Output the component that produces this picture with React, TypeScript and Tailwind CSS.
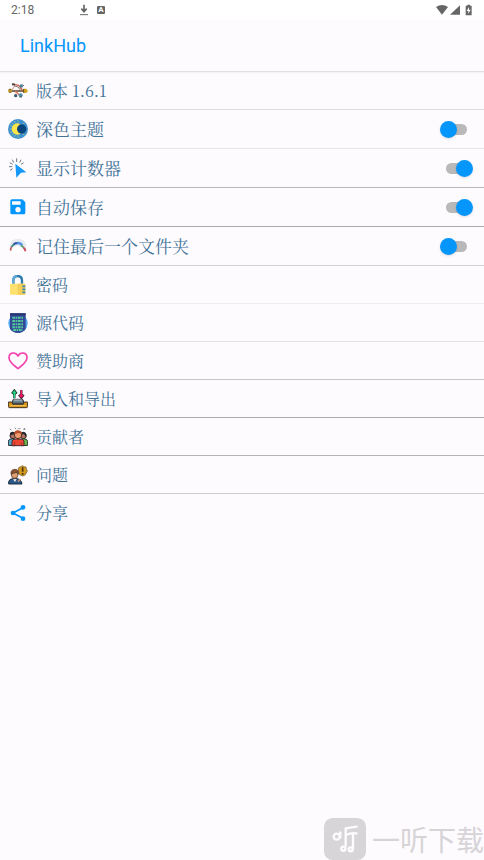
import {useState} from "react";
import type {ReactNode} from "react";

interface Setting {
    label: string;
    version?: string;
    icon: ReactNode;
    toggle?: boolean;
    border: string;
}

const VersionIcon = () => (
    <svg className="size-5 shrink-0" viewBox="0 0 60 60" fill="none">
        <path d="M5 30H52" stroke="#6b5335" strokeWidth="5" />
        <path d="M12 27L20 15" stroke="#e0b0a4" strokeWidth="4" />
        <path d="M17 10L32 13L43 27" stroke="#c9604c" strokeWidth="4" />
        <path d="M18 14L30 18L37 27" stroke="#4a3330" strokeWidth="2" />
        <path d="M22 31L32 40L40 42" stroke="#d9705c" strokeWidth="4" />
        <path d="M19 34L28 42" stroke="#e3b3a8" strokeWidth="2" />
        <rect x="12" y="7" width="8" height="6" fill="#4a4341" />
        <circle cx="40" cy="15" r="5" fill="#477d96" />
        <path d="M44 11L48 15" stroke="#333" strokeWidth="2" />
        <circle cx="23" cy="44" r="5" fill="#3f5f70" />
        <circle cx="38" cy="43" r="6" fill="#528ca2" />
        <path d="M34 48H42" stroke="#333" strokeWidth="2" />
        <circle cx="6" cy="29" r="6" fill="#c39a2a" />
        <path d="M3 25H10M3 34H10" stroke="#5a4420" strokeWidth="2" />
        <path d="M46 23H55L60 30L55 36H46Z" fill="#d5a321" />
        <path d="M47 24V35" stroke="#5a4420" strokeWidth="3" />
    </svg>
);

const ThemeIcon = () => (
    <svg className="size-5 shrink-0" viewBox="0 0 60 60">
        <circle cx="30" cy="30" r="30" fill="#3e91cf" />
        <path d="M30 4V11M30 49V56M4 30H11M11 11L17 17M11 49L17 43M49 11L43 17M49 49L43 43M19 6L22 12M19 54L22 48M6 19L12 22M6 41L12 38" stroke="#b9d283" strokeWidth="2" />
        <circle cx="28" cy="30" r="17" fill="#ffe44a" />
        <circle cx="41" cy="30" r="14" fill="#07457c" />
    </svg>
);

const CounterIcon = () => (
    <svg className="size-5 shrink-0" viewBox="0 0 60 60" fill="none">
        <path d="M26 1V12M13 5L17 14M39 5L35 14M5 14L14 19M47 14L39 19M3 26H13M6 37L14 32" stroke="#6d7984" strokeWidth="3" />
        <path d="M22 17L55 43L39 44L25 59Z" fill="#1497f6" />
    </svg>
);

const SaveIcon = () => (
    <svg className="size-5 shrink-0" viewBox="0 0 60 60">
        <path fillRule="evenodd" d="M12 7H43L52 16V47Q52 52 47 52H12Q7 52 7 47V12Q7 7 12 7ZM12 13V23H38V13ZM30 30A8 8 0 1 0 30 46A8 8 0 1 0 30 30Z" fill="#0596fc" />
    </svg>
);

const FolderMemoryIcon = () => (
    <svg className="size-5 shrink-0" viewBox="0 0 60 60" fill="none">
        <path d="M5 40V27Q8 8 30 8Q52 8 55 29V42H5Z" fill="#e9ecee" />
        <path d="M8 44Q7 37 11 33" stroke="#c75056" strokeWidth="5" />
        <path d="M11 33Q13 27 19 25" stroke="#3d8b82" strokeWidth="6" />
        <path d="M17 25Q24 20 30 22" stroke="#365ca9" strokeWidth="7" />
        <path d="M28 21Q38 20 42 28" stroke="#5a94ea" strokeWidth="8" />
        <path d="M40 28L47 35" stroke="#4ba165" strokeWidth="5" />
        <path d="M46 35Q52 38 52 46" stroke="#cf4f60" strokeWidth="6" />
        <path d="M12 46Q10 33 21 33Q27 27 34 32Q47 34 47 46Q36 56 20 50Z" fill="#fff" />
    </svg>
);

const PasswordIcon = () => (
    <svg className="size-5 shrink-0" viewBox="0 0 60 60" fill="none">
        <path d="M16 29V17Q16 3 29 3Q42 3 42 17V29" stroke="#2b79ad" strokeWidth="7" />
        <path d="M16 29V17Q16 4 27 3" stroke="#5daad9" strokeWidth="7" />
        <rect x="6" y="26" width="46" height="33" rx="3" fill="#ffe16f" />
        <path d="M29 26H49Q52 26 52 29V56Q52 59 49 59H29Z" fill="#f4ce58" />
        <path d="M43 34H52M43 43H52M43 52H52" stroke="#3d87a9" strokeWidth="5" />
    </svg>
);

const SourceIcon = () => (
    <svg className="size-5 shrink-0" viewBox="0 0 60 60" fill="none">
        <circle cx="30" cy="31" r="29" fill="#51a9ef" />
        <path d="M6 1H53V48Q43 60 30 60Q16 60 6 48Z" fill="#344a96" />
        <path d="M6 1H53V7H6Z" fill="#263570" />
        <path d="M13 14H47M13 24H47M13 34H47M13 43H47M16 51H44" stroke="#51c999" strokeWidth="6" strokeDasharray="8 2 5 2" />
    </svg>
);

const HeartIcon = () => (
    <svg className="size-5 shrink-0" viewBox="0 0 60 60" fill="none">
        <path d="M30 53C20 44 3 34 3 20C3 3 23 2 30 15C37 2 57 3 57 20C57 34 40 44 30 53Z" stroke="#f044ae" strokeWidth="5" strokeLinejoin="round" />
    </svg>
);

const ImportExportIcon = () => (
    <svg className="size-5 shrink-0" viewBox="0 0 60 60" fill="none">
        <path d="M19 28V8M12 14L19 5L26 14" stroke="#17312a" strokeWidth="7" />
        <path d="M19 27V10M14 13L19 7L24 13" stroke="#21da83" strokeWidth="4" />
        <path d="M40 3V22M33 17L40 26L47 17" stroke="#431d2e" strokeWidth="7" />
        <path d="M40 3V21M35 18L40 24L45 18" stroke="#ef1762" strokeWidth="4" />
        <path d="M16 31H44L49 43H11Z" fill="#6b858e" stroke="#27272b" strokeWidth="3" />
        <path d="M17 33H42" stroke="#b8cbd1" strokeWidth="3" />
        <path d="M1 39H11L15 47H45L49 39H59V52Q59 56 55 56H5Q1 56 1 52Z" fill="#d89621" stroke="#3b3020" strokeWidth="3" />
        <path d="M7 50H53" stroke="#fac64c" strokeWidth="3" />
    </svg>
);

const ContributorsIcon = () => (
    <svg className="size-5 shrink-0" viewBox="0 0 60 60" fill="none">
        <path d="M5 6L10 9M20 3L24 6M29 7L32 3M36 3V7M47 5L52 8M51 3L47 9" stroke="#555" strokeWidth="2" />
        <path d="M1 55V42Q2 36 13 35L21 42V56Z" fill="#56a6c7" stroke="#292c32" strokeWidth="3" />
        <path d="M39 56V42L47 35Q58 36 59 43V55Z" fill="#6fb94a" stroke="#292c32" strokeWidth="3" />
        <circle cx="15" cy="26" r="9" fill="#b97562" stroke="#292323" strokeWidth="3" />
        <path d="M6 26V18Q14 11 22 18V27L17 22Z" fill="#292a30" />
        <circle cx="46" cy="26" r="9" fill="#b97562" stroke="#292323" strokeWidth="3" />
        <path d="M38 25V18Q47 10 54 19V29L47 21Z" fill="#292a30" />
        <path d="M12 56V42Q14 36 26 36H34Q46 36 48 42V56Z" fill="#ed4534" stroke="#492b2a" strokeWidth="3" />
        <circle cx="30" cy="24" r="11" fill="#ef9b70" stroke="#492f29" strokeWidth="3" />
        <path d="M19 21Q18 10 30 10Q43 11 41 24L34 18Z" fill="#b94c28" />
        <path d="M20 55V46M40 55V46" stroke="#792e2b" strokeWidth="2" />
    </svg>
);

const IssueIcon = () => (
    <svg className="size-5 shrink-0" viewBox="0 0 60 60" fill="none">
        <path d="M34 6L39 5L43 2L48 5L54 6L55 12L58 17L55 24L51 30L44 33L37 30L32 26L32 18L30 12Z" fill="#d29a1c" stroke="#6b5220" strokeWidth="2" />
        <path d="M44 7V20M44 24V29" stroke="#4a3210" strokeWidth="5" />
        <path d="M2 57V50Q4 42 14 41H27Q40 43 42 57Z" fill="#29588b" stroke="#202e3c" strokeWidth="3" />
        <path d="M15 43L21 51L26 42" fill="#f4eee2" />
        <circle cx="20" cy="30" r="10" fill="#db9f73" stroke="#4b3026" strokeWidth="2" />
        <path d="M9 28Q7 14 20 13Q33 13 31 28L25 22L13 26Z" fill="#8a5435" stroke="#4b3026" strokeWidth="2" />
        <path d="M30 50L37 42" stroke="#c98b65" strokeWidth="5" />
    </svg>
);

const ShareIcon = () => (
    <svg className="size-5 shrink-0" viewBox="0 0 60 60">
        <path d="M15 30L45 14M15 30L45 46" stroke="#0596fc" strokeWidth="5" />
        <circle cx="15" cy="30" r="7" fill="#0596fc" />
        <circle cx="45" cy="13" r="7" fill="#0596fc" />
        <circle cx="45" cy="47" r="7" fill="#0596fc" />
    </svg>
);

const settings: Setting[] = [
    {label: "版本", version: "1.6.1", icon: <VersionIcon />, border: "border-[#dedbdf]"},
    {label: "深色主题", icon: <ThemeIcon />, toggle: false, border: "border-[#e9e6ea]"},
    {label: "显示计数器", icon: <CounterIcon />, toggle: true, border: "border-[#bab8bb]"},
    {label: "自动保存", icon: <SaveIcon />, toggle: true, border: "border-[#aba9ac]"},
    {label: "记住最后一个文件夹", icon: <FolderMemoryIcon />, toggle: false, border: "border-[#d2d0d3]"},
    {label: "密码", icon: <PasswordIcon />, border: "border-[#f0edf1]"},
    {label: "源代码", icon: <SourceIcon />, border: "border-[#e3e0e4]"},
    {label: "赞助商", icon: <HeartIcon />, border: "border-[#c8c6c9]"},
    {label: "导入和导出", icon: <ImportExportIcon />, border: "border-[#aba9ac]"},
    {label: "贡献者", icon: <ContributorsIcon />, border: "border-[#b4b2b5]"},
    {label: "问题", icon: <IssueIcon />, border: "border-[#cdcbce]"},
    {label: "分享", icon: <ShareIcon />, border: "border-transparent"},
];

const StatusBar = () => (
    <div className="flex h-5 items-center justify-between bg-white pr-3 pl-[11px] text-[#666]">
        <div className="flex items-center">
            <span className="w-[68px] text-xs">2:18</span>
            <svg className="mr-2 h-3 w-[10px]" viewBox="0 0 30 36" fill="none">
                <path d="M15 2V20M7 14L15 23L23 14" stroke="currentColor" strokeWidth="5" />
                <path d="M3 32H27" stroke="currentColor" strokeWidth="3" />
            </svg>
            <span className="flex size-2 items-center justify-center rounded-[1px] bg-[#666] text-[8px] leading-none font-bold text-white">A</span>
        </div>
        <svg className="h-3 w-9" viewBox="0 0 108 36" fill="currentColor">
            <path d="M0 9Q18-3 36 9L18 32Z" />
            <path d="M72 4V32H42Z" />
            <path fillRule="evenodd" d="M94 2H102V5H107V34H89V5H94ZM99 9L92 21H97V29L104 17H99Z" />
        </svg>
    </div>
);

const SettingRow = ({setting}: {setting: Setting}) => {
    const [checked, setChecked] = useState(setting.toggle ?? false);

    if (setting.toggle === undefined) {
        return (
            <button type="button" className={`flex h-[38px] w-full items-center gap-2 border-b pr-3 pl-2 text-left text-base ${setting.border}`}>
                {setting.icon}
                <span>
                    {setting.label}
                    {setting.version && ` ${setting.version}`}
                </span>
            </button>
        );
    }

    return (
        <label className={`flex h-[39px] items-center gap-2 border-b pr-[11px] pl-2 text-[17px] ${setting.border}`}>
            {setting.icon}
            <span className="grow">{setting.label}</span>
            <input
                type="checkbox"
                checked={checked}
                onChange={(e) => setChecked(e.target.checked)}
                className="relative h-[17px] w-[33px] appearance-none before:absolute before:inset-x-[6px] before:inset-y-[3px] before:rounded-full before:bg-[#b9b9b9] after:absolute after:top-0 after:left-0 after:size-[17px] after:rounded-full after:bg-[#0596fc] after:shadow-sm checked:after:left-4"
            />
        </label>
    );
};

const Watermark = () => (
    <footer className="mt-auto flex items-center justify-end gap-1.5 font-['Noto_Sans_CJK_SC',sans-serif] text-[28px] leading-none whitespace-nowrap text-[#d7d4d8]">
        <svg className="size-[42px]" viewBox="0 0 126 126" fill="none">
            <rect width="126" height="126" rx="26" fill="#d7d5d8" />
            <g stroke="#fefbff" strokeWidth="7" strokeLinecap="round">
                <circle cx="38" cy="56" r="9" />
                <path d="M49 58V43" />
                <path d="M65 31L98 26M65 31V84M66 51Q79 44 98 46M87 48V93" />
                <circle cx="58" cy="92" r="6" />
                <circle cx="80" cy="94" r="6" />
            </g>
        </svg>
        <span>一听下载</span>
    </footer>
);

const App = () => (
    <div className="flex min-h-screen flex-col bg-[#fefbff] font-[Roboto,sans-serif]">
        <StatusBar />
        <header className="flex h-[52px] items-center border-b border-[#e2dfe3] px-5 shadow-xs">
            <h1 className="text-lg text-[#0596fc]">LinkHub</h1>
        </header>
        <main className="font-['Noto_Serif_CJK_SC','Noto_Sans_CJK_SC',serif] text-[#427397]">
            {settings.map((setting) => (
                <SettingRow key={setting.label} setting={setting} />
            ))}
        </main>
        <Watermark />
    </div>
);

export default App;
